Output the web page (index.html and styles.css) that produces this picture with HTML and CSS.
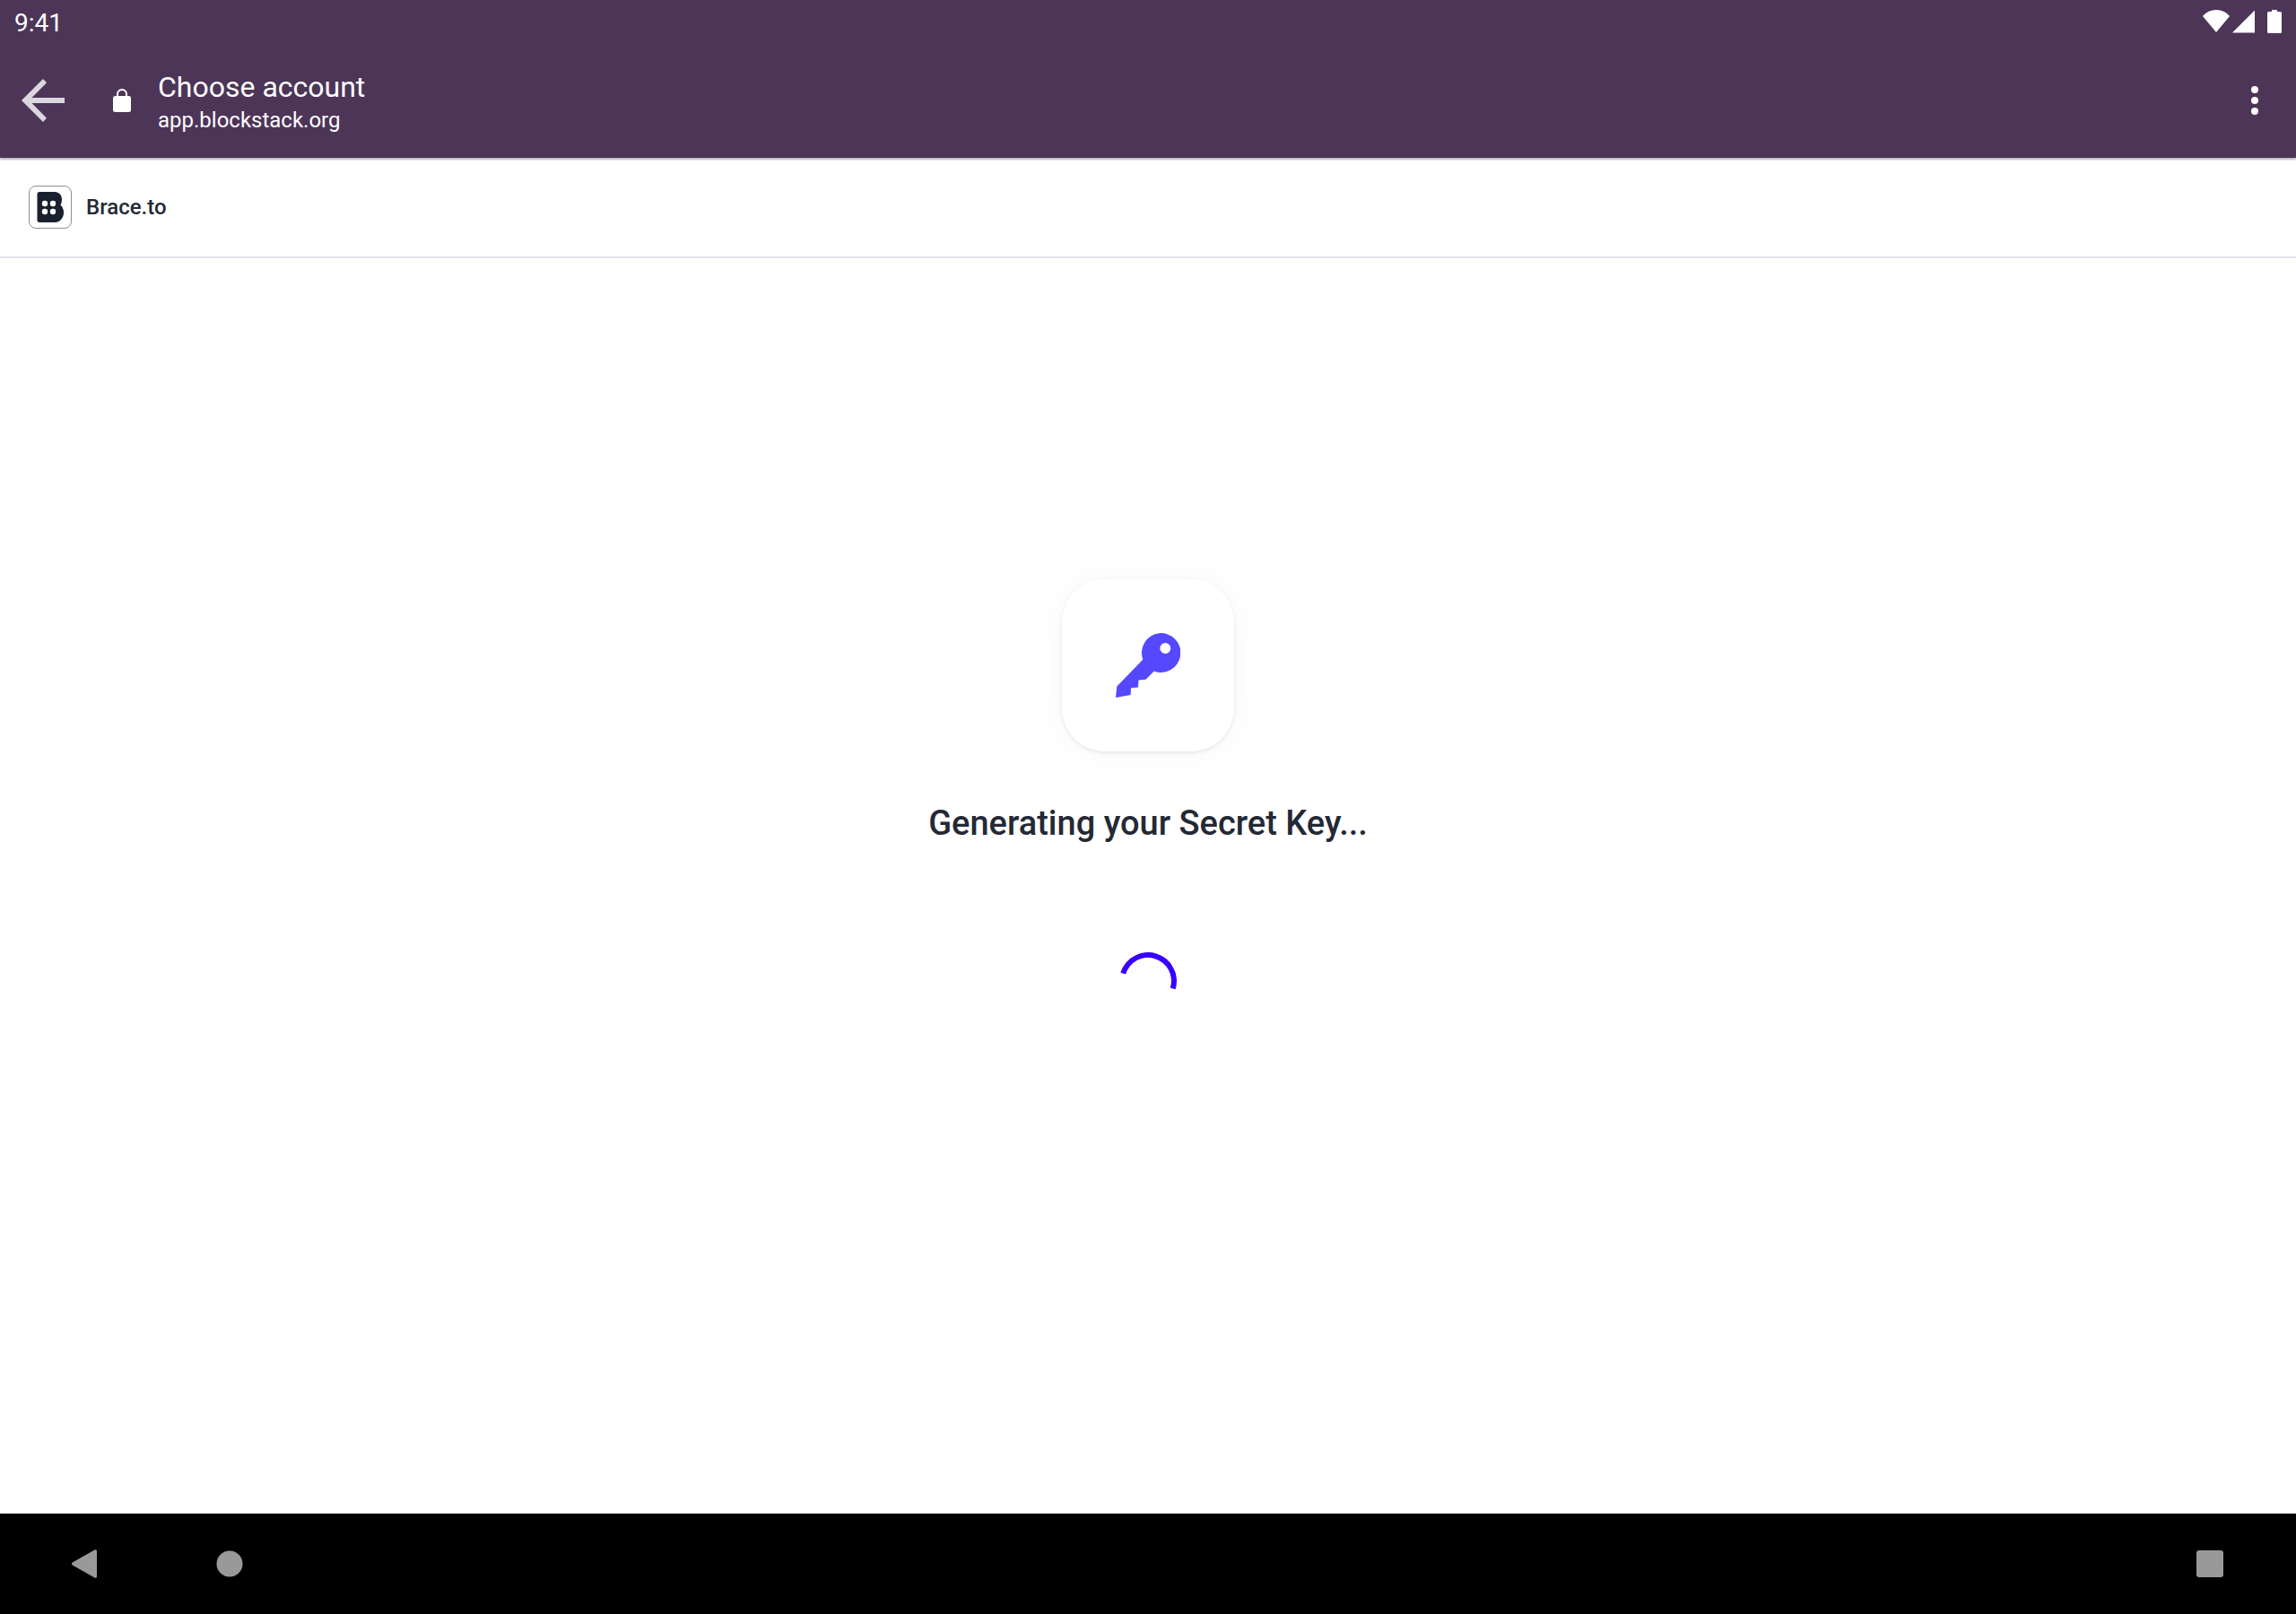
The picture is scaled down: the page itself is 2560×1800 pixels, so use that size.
FILE: index.html
```html
<!DOCTYPE html>
<html lang="en">
<head>
<meta charset="utf-8">
<meta name="viewport" content="width=device-width, initial-scale=1">
<title>Choose account</title>
<link rel="stylesheet" href="styles.css">
</head>
<body>
<div class="status-bar">
  <time class="clock">9:41</time>
  <svg class="status-icons" width="90" height="30" viewBox="0 1 90 30" aria-hidden="true">
    <path d="M0 8Q6 1 15 1T30 8L15 26Z"/>
    <path d="M33 26.500L58 1.500V26.500Z"/>
    <path d="M77 3V1h6v2h3.500q1.500 0 1.500 1.500v21q0 1.500-1.500 1.500h-13q-1.500 0-1.500-1.500v-21q0-1.500 1.500-1.500z"/>
  </svg>
</div>
<header class="app-bar">
  <button class="icon-button" type="button" aria-label="Back">
    <svg width="48" height="48" viewBox="0 0 48 48"><path class="arrow" d="M48 21H11.500L28 4.200L24 0L0 24L24 48L28 43.800L11.500 27H48Z"/></svg>
  </button>
  <svg class="lock" width="20" height="28" viewBox="0 0 20 28" aria-hidden="true">
    <path class="shackle" d="M5 10V7a5 5 0 0 1 10 0v3"/>
    <rect y="9" width="20" height="18" rx="2.500"/>
  </svg>
  <div class="page-info">
    <h1 class="page-title">Choose account</h1>
    <p class="page-host">app.blockstack.org</p>
  </div>
  <button class="icon-button" type="button" aria-label="More options">
    <svg width="8" height="32" viewBox="0 0 8 32"><circle cx="4" cy="4" r="4"/><circle cx="4" cy="16" r="4"/><circle cx="4" cy="28" r="4"/></svg>
  </button>
</header>
<div class="app-name">
  <svg class="app-logo" width="48" height="48" viewBox="0 0 48 48" aria-hidden="true">
    <rect class="logo-frame" x=".5" y=".5" width="47" height="47" rx="7.500"/>
    <path class="logo-letter" d="M12 7H29C34 7 37 11 37 15.500Q37 19 35.500 21.500Q39 25 39 30C39 36 35 41 29 41H12Q9.500 41 9.500 38.500V9.500Q9.500 7 12 7Z"/>
    <g class="logo-dots"><circle cx="18" cy="20" r="3.200"/><circle cx="27" cy="20" r="3.200"/><circle cx="18" cy="29" r="3.200"/><circle cx="27" cy="29" r="3.200"/></g>
  </svg>
  <span>Brace.to</span>
</div>
<main class="content">
  <div class="key-card">
    <svg width="72" height="72" viewBox="0 0 72 72" aria-hidden="true"><path fill-rule="evenodd" d="M30.300 29.500A21.700 21.900 0 1 1 42.800 42.400L33.500 51.800L25.500 52.500L25 60.500L17 61.200L16.700 69L0 72L1.300 59.500ZM55.300 11a6 6 0 1 0 0 12a6 6 0 0 0 0-12Z"/></svg>
  </div>
  <h2 class="message">Generating your Secret Key...</h2>
  <div class="spinner" role="status" aria-label="Loading"></div>
</main>
<nav class="system-nav" aria-label="System">
  <button class="nav-button" type="button" aria-label="Back"><svg width="32" height="32" viewBox="0 0 32 32"><path d="M.8 14.500L25.500.4Q28 -.5 28 2V30Q28 32.500 25.500 31.600L.8 17.500Q-.8 16 .8 14.500Z"/></svg></button>
  <button class="nav-button" type="button" aria-label="Home"><svg width="32" height="32" viewBox="0 0 32 32"><circle cx="16" cy="16" r="14.500"/></svg></button>
  <button class="nav-button recent" type="button" aria-label="Recent apps"><svg width="32" height="32" viewBox="0 0 32 32"><rect x="1" y="1" width="30" height="30" rx="3"/></svg></button>
</nav>
</body>
</html>
```
FILE: styles.css
```css
* {
  box-sizing: border-box;
}

body {
  display: flex;
  flex-direction: column;
  min-height: 100vh;
  margin: 0;
  background: #fff;
  color: #242934;
  font-family: Roboto, "Liberation Sans", sans-serif;
}

h1,
h2,
p {
  margin: 0;
}

svg {
  display: block;
  fill: currentColor;
}

button {
  display: flex;
  align-items: center;
  justify-content: center;
  padding: 0;
  border: 0;
  background: none;
  color: inherit;
}

.status-bar {
  display: flex;
  align-items: center;
  justify-content: space-between;
  height: 48px;
  padding: 4px 14px 0 16px;
  background: #4d3558;
  color: #fff;
}

.clock {
  font-size: 28px;
  line-height: 32px;
}

.app-bar {
  display: flex;
  align-items: center;
  height: 128px;
  background: #4d3558;
  color: #fff;
  box-shadow: 0 2px 2px rgba(0, 0, 0, 0.3);
}

.icon-button {
  width: 92px;
  height: 96px;
}

.icon-button:first-child {
  width: 96px;
}

.arrow {
  fill: #dbd7de;
}

.lock {
  margin: 0 30px;
}

.shackle {
  fill: none;
  stroke: currentColor;
  stroke-width: 2;
}

.page-info {
  flex: 1;
}

.page-title {
  font-size: 32px;
  font-weight: 400;
  line-height: 44px;
}

.page-host {
  font-size: 24px;
  line-height: 30px;
}

.app-name {
  display: flex;
  align-items: center;
  gap: 16px;
  height: 112px;
  padding: 0 32px;
  border-bottom: 2px solid #e5e5ec;
  font-size: 24px;
  font-weight: 500;
  line-height: 32px;
}

.logo-frame {
  fill: #fff;
  stroke: #8d8d99;
}

.logo-letter {
  fill: #1a202e;
}

.logo-dots {
  fill: #fff;
}

.content {
  display: flex;
  flex: 1;
  flex-direction: column;
  align-items: center;
  justify-content: center;
  padding-bottom: 204px;
}

.key-card {
  display: grid;
  place-items: center;
  width: 192px;
  height: 192px;
  border-radius: 48px;
  background: #fff;
  color: #5548ff;
  box-shadow: 0 2px 4px rgba(0, 0, 0, 0.08), 0 0 32px rgba(0, 0, 0, 0.04);
}

.message {
  margin: 52px 0 116px;
  font-size: 38px;
  font-weight: 500;
  line-height: 56px;
}

.spinner {
  width: 64px;
  height: 64px;
  border: 6px solid #3700ff;
  border-bottom-color: transparent;
  border-left-color: transparent;
  border-radius: 50%;
  transform: rotate(-28deg);
}

.system-nav {
  display: flex;
  align-items: center;
  gap: 64px;
  height: 112px;
  padding: 0 48px;
  background: #000;
  color: #999;
}

.nav-button {
  width: 96px;
  height: 96px;
}

.recent {
  margin-left: auto;
}
```
